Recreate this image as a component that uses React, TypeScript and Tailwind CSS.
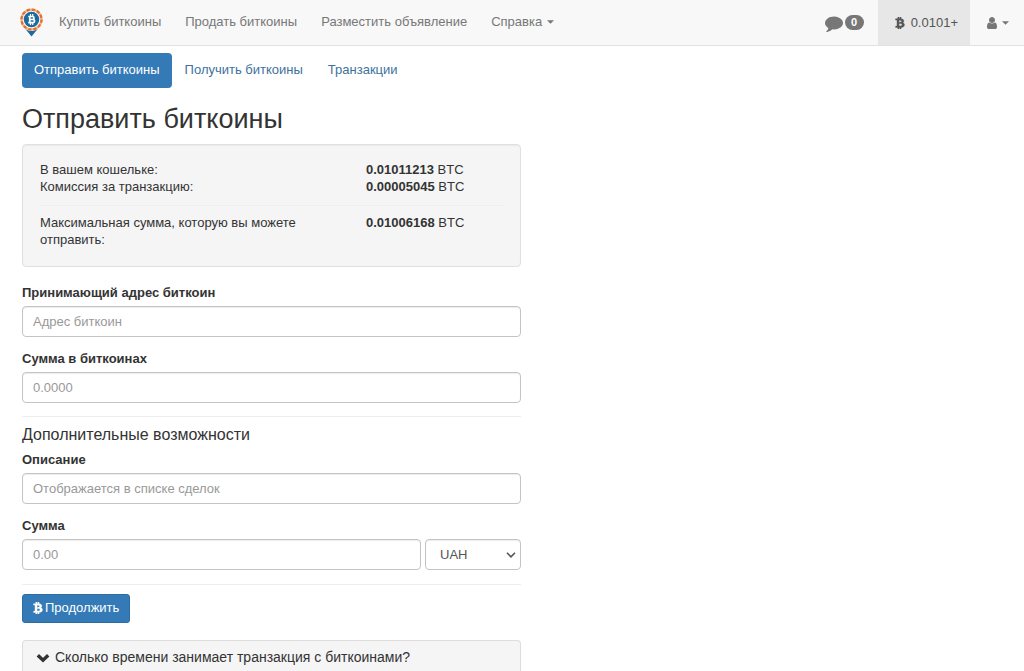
import type { ReactNode } from "react";
import { FaBtc } from "react-icons/fa";

const inputClass =
  "block h-[31px] w-full min-w-0 rounded border border-[#c4c4c4] bg-white px-[10px] pb-[1px] text-[13px] text-[#555] shadow-[inset_0_1px_1px_rgba(0,0,0,0.075)] placeholder:text-[#999] focus:border-[#66afe9] focus:outline-none";

function Logo() {
  return (
    <svg viewBox="0 0 46 58" className="h-[29px] w-[23px]" aria-hidden="true">
      <path d="M10 41 L36 41 L23 57 Z" fill="#1c6a9e" />
      <circle cx="23" cy="23" r="22.8" fill="#f7f7f7" />
      <circle cx="23" cy="23" r="20" fill="none" stroke="#f3b488" strokeWidth="4.5" />
      <circle cx="23" cy="23" r="20" fill="none" stroke="#dc7036" strokeWidth="4.5" strokeDasharray="6.500 3.970" />
      <circle cx="23" cy="23" r="15.500" fill="#1c6a9e" />
      <g fill="none" stroke="#fff" strokeWidth="3.4">
        <path d="M16.500 17h8.500a3 3 0 0 1 0 6h-5.500h6.500a3.200 3.200 0 0 1 0 6.400h-9.500M19.500 16v14" />
        <path d="M21 12v4M25.500 12v4M21 30v4M25.500 30v4" strokeWidth="2.4" />
      </g>
    </svg>
  );
}

function CommentIcon() {
  return (
    <svg viewBox="0 0 1792 1792" className="size-[18px]" fill="currentColor" aria-hidden="true">
      <path d="M1792 896q0 174-120 321.5t-326 233-450 85.5q-70 0-145-8-198 175-460 242-49 14-114 22-17 2-30.5-9t-17.5-29v-1q-3-4-.5-12t2-10 4.5-9.5l6-9 7-8.5 8-9q7-8 31-34.5t34.500-38 31-39.5 32.500-51 27-59 26-76q-157-89-247.500-220t-90.500-281q0-130 71-248.500t191-204.500 286-136.500 348-50.500q244 0 450 85.500t326 233 120 321.500z" />
    </svg>
  );
}

function UserIcon() {
  return (
    <svg viewBox="0 0 1280 1792" className="h-[14px] w-[10px]" fill="currentColor" aria-hidden="true">
      <path d="M1280 1399q0 109-62.500 187t-150.500 78h-854q-88 0-150.500-78t-62.500-187q0-85 8.500-160.500t31.500-152 58.500-131 94-89 134.500-34.500q131 128 313 128t313-128q76 0 134.500 34.500t94 89 58.500 131 31.500 152 8.500 160.500zm-256-887q0 159-112.500 271.500t-271.500 112.500-271.500-112.500-112.500-271.500 112.500-271.500 271.500-112.500 271.500 112.500 112.500 271.500z" />
    </svg>
  );
}

function BtcIcon() {
  return <FaBtc className="h-3 w-[10px]" stroke="currentColor" strokeWidth="20" aria-hidden="true" />;
}

function ChevronDownIcon() {
  return (
    <svg viewBox="0 0 14 10" className="h-[10px] w-[14px]" fill="none" stroke="currentColor" strokeWidth="3.400" aria-hidden="true">
      <path d="M1.800 2.200 7 7.200l5.200-5" />
    </svg>
  );
}

function Caret() {
  return (
    <svg viewBox="0 0 8 4" className="h-1 w-[7px]" fill="currentColor" aria-hidden="true">
      <path d="M0 0h8L4 4z" />
    </svg>
  );
}

function Field({ id, label, children }: { id: string; label: string; children: ReactNode }) {
  return (
    <div className="flex flex-col gap-[5px]">
      <label htmlFor={id} className="font-bold">
        {label}
      </label>
      {children}
    </div>
  );
}

function BalanceRow({ label, value }: { label: string; value: string }) {
  return (
    <div className="flex">
      <dt className="w-[326px] shrink-0 pr-[60px]">{label}</dt>
      <dd>
        <strong>{value}</strong> BTC
      </dd>
    </div>
  );
}

function Navbar() {
  return (
    <header className="flex h-[46px] items-stretch justify-between border-b border-[#e2e2e2] bg-[#f8f8f8] text-[#777]">
      <nav className="flex items-center">
        <a href="#home" aria-label="Главная" className="mr-4 ml-5">
          <Logo />
        </a>
        <div className="flex items-center gap-6 pb-[2px]">
          <a href="#buy">Купить биткоины</a>
          <a href="#sell">Продать биткоины</a>
          <a href="#post">Разместить объявление</a>
          <button type="button" className="flex items-center gap-[5px]">
            Справка
            <Caret />
          </button>
        </div>
      </nav>
      <div className="flex items-stretch">
        <a href="#messages" aria-label="Сообщения" className="flex items-center gap-[2px] px-[14px]">
          <CommentIcon />
          <span className="flex h-[15px] w-[19px] items-center justify-center rounded-full bg-[#777] text-[11px] leading-[11px] font-bold text-white">
            0
          </span>
        </a>
        <a href="#wallet" className="flex items-center gap-[6px] bg-[#e7e7e7] pr-3 pl-[17px] text-[#555]">
          <BtcIcon />
          0.0101+
        </a>
        <button type="button" aria-label="Профиль" className="flex items-center gap-[5px] pr-[15px] pl-[17px]">
          <UserIcon />
          <Caret />
        </button>
      </div>
    </header>
  );
}

export default function App() {
  return (
    <div className="bg-white font-['Liberation_Sans',Arial,sans-serif] text-[13px] leading-[17px] text-[#333]">
      <Navbar />
      <main className="px-[22px] pt-[7px]">
        <nav className="flex gap-px text-[#3e729c]">
          <a href="#send" className="rounded bg-[#337ab7] px-3 pt-2 pb-[10px] text-white">
            Отправить биткоины
          </a>
          <a href="#receive" className="rounded px-3 pt-2 pb-[10px]">
            Получить биткоины
          </a>
          <a href="#transactions" className="rounded px-3 pt-2 pb-[10px]">
            Транзакции
          </a>
        </nav>

        <h1 className="mt-[15px] mb-[9px] text-[27px] leading-8">Отправить биткоины</h1>

        <div className="w-full max-w-[499px]">
          <dl className="rounded border border-[#e0e0e0] bg-[#f5f5f5] px-[17px] pt-4 pb-[18px] shadow-[inset_0_1px_1px_rgba(0,0,0,0.05)]">
            <BalanceRow label="В вашем кошельке:" value="0.01011213" />
            <BalanceRow label="Комиссия за транзакцию:" value="0.00005045" />
            <div className="mt-[10px] border-t border-[#eee] pt-2">
              <BalanceRow label="Максимальная сумма, которую вы можете отправить:" value="0.01006168" />
            </div>
          </dl>

          <form className="pt-[17px]" onSubmit={(event) => event.preventDefault()}>
            <div className="flex flex-col gap-[13px]">
              <Field id="address" label="Принимающий адрес биткоин">
                <input id="address" type="text" placeholder="Адрес биткоин" className={inputClass} />
              </Field>
              <Field id="btc-amount" label="Сумма в биткоинах">
                <input id="btc-amount" type="text" placeholder="0.0000" className={inputClass} />
              </Field>
            </div>

            <hr className="mt-[13px] border-[#eee]" />
            <h2 className="mt-[9px] mb-[7px] text-base leading-[18px]">Дополнительные возможности</h2>

            <div className="flex flex-col gap-[13px]">
              <Field id="description" label="Описание">
                <input id="description" type="text" placeholder="Отображается в списке сделок" className={inputClass} />
              </Field>
              <Field id="amount" label="Сумма">
                <div className="flex gap-1">
                  <input id="amount" type="text" placeholder="0.00" className={inputClass} />
                  <div className="relative w-24 shrink-0">
                    <select
                      aria-label="Валюта"
                      defaultValue="UAH"
                      className="block h-[31px] w-full appearance-none rounded border border-[#c4c4c4] bg-white px-[14px] text-[13px] text-[#555] shadow-[inset_0_1px_1px_rgba(0,0,0,0.075)]"
                    >
                      <option>UAH</option>
                    </select>
                    <svg
                      viewBox="0 0 10 6"
                      className="pointer-events-none absolute top-[13px] right-[5px] h-[6px] w-[10px]"
                      fill="none"
                      stroke="#555"
                      strokeWidth="1.600"
                      aria-hidden="true"
                    >
                      <path d="M1 .8 5 4.800 9 .8" />
                    </svg>
                  </div>
                </div>
              </Field>
            </div>

            <hr className="mt-[14px] border-[#eee]" />
            <button
              type="submit"
              className="mt-[9px] flex h-[29px] items-center gap-[2px] rounded-[3px] border border-[#2e6da4] bg-[#337ab7] px-[10px] pb-[2px] text-white"
            >
              <BtcIcon />
              Продолжить
            </button>
          </form>

          <section className="mt-[17px] rounded-t border border-b-0 border-[#ddd] bg-[#f5f5f5] px-[13px] pt-2 pb-[5px]">
            <h2 className="text-[14px] leading-[17px]">
              <button type="button" className="flex items-center gap-[5px]">
                <ChevronDownIcon />
                Сколько времени занимает транзакция с биткоинами?
              </button>
            </h2>
          </section>
        </div>
      </main>
    </div>
  );
}
